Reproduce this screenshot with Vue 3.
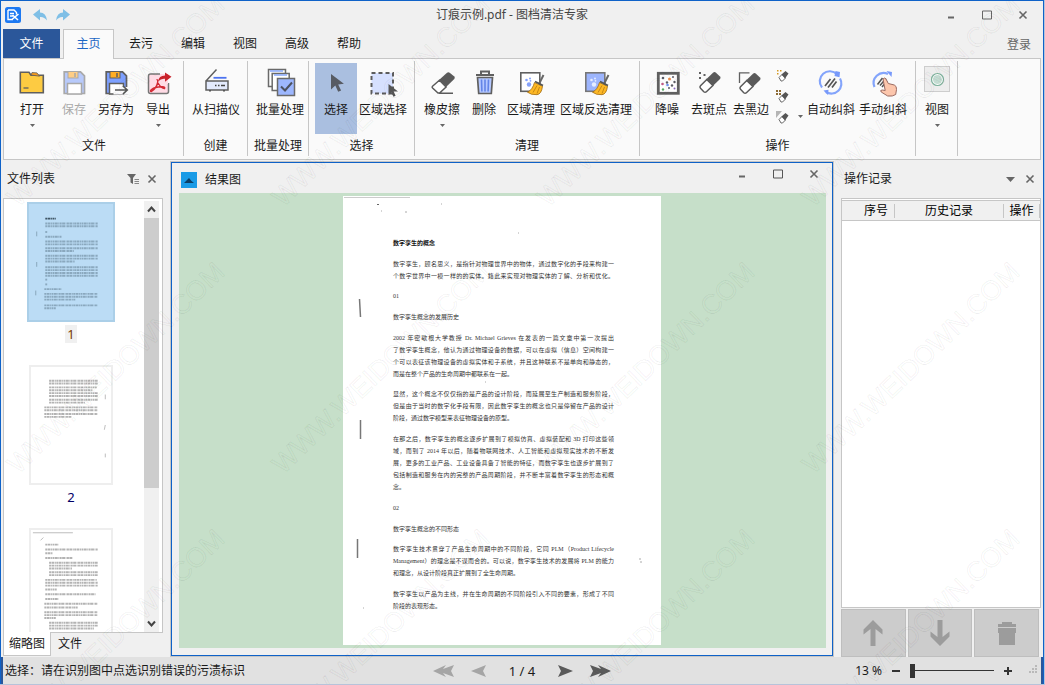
<script setup>
import { ref } from 'vue'

const floppy = (body, line, metal) => `
  <path d="M3.200 1.800h16.300l4 4v17.700h-20.300z" fill="${body}" stroke="${line}" stroke-width="1.700"/>
  <rect x="7" y="1.500" width="10" height="6.500" fill="${metal}" stroke="${line}"/>
  <path d="M14 3v4" stroke="${line}" stroke-width="1.500"/>
  <path d="M6.500 24v-10.500h14v10.500z" fill="#fff" stroke="${line}" stroke-width="1.500"/>`

const broom = `
  <path d="M25.500 5l-4.500 9" stroke="#666" stroke-width="2"/>
  <path d="M16.500 12.500l8 3.700q-1 8-5.500 8.500-6 .3-9.500-2.500 5-2.500 7-9.700z" fill="#fdb825" stroke="#a06a10" stroke-width=".8"/>
  <path d="M19 15.500l-4 7M21.500 17l-2.500 6.500" stroke="#b87a10" stroke-width=".8"/>
  <path d="M17 11.500l8 4" stroke="#555" stroke-width="1.800"/>`

const bubbles = (c) => `<g fill="${c}"><circle cx="8.500" cy="10" r="1.300"/><circle cx="12" cy="8.500" r="1"/><circle cx="12.500" cy="10.800" r=".9"/><circle cx="11" cy="14.500" r="2.200"/></g>`

// Diagonal two-tone eraser: dark sleeve at the upper right, white tip at the lower left
const rubber = `
  <path d="M10.800 9.500l-6.300 6.300q-1.200 1.300 0 2.500l3.300 3.400q1.300 1.200 2.600 0l6.500-6.200z" fill="#fff" stroke="#5a5a5a" stroke-width="1.500"/>
  <path d="M10 9.500l7-6.800q1.500-1.200 3 0l4 3.800q1.200 1.300 0 2.600l-7.200 7z" fill="#5a5a5a"/>`

const icons = {
  open: `<path d="M1.300 22.800v-20.600h8.700l2 3h12.300v17.600z" fill="#fdcb42" stroke="#5f5f5f" stroke-width="1.600"/>
    <path d="M12 5l1-2.500 5 .4 2.500 3.300z" fill="#f59a1d" stroke="#5f5f5f" stroke-width=".8"/><path d="M4.500 18h5" stroke="#5f5f5f" stroke-width="1.300"/>`,
  save: floppy('#b8cafb', '#a9a9a9', '#ffce85'),
  saveAs: floppy('#7da0ff', '#5f5f5f', '#ffad23') + `<path d="M10.500 17h15v7.500h-15z" fill="#fafafa"/><path d="M12 20h12M20 16l4.200 4-4.200 4" fill="none" stroke="#555" stroke-width="1.700"/>`,
  exportFile: `<path d="M15 4H5.500q-2 0-2 2v15.500q0 2 2 2h16q2 0 2-2V13" fill="#ffdbe5" stroke="#777" stroke-width="1.500"/><path d="M15 4h8v10h-8z" fill="#ffdbe5"/>
    <path d="M11.500 10q1.800-1 1 3-1 5-6 8.500-2 0 0-2 4-3 11-2.700 3 .3 2 1.700-3 .2-6.500-5.500" fill="none" stroke="#d42a35" stroke-width="1.400"/>
    <path d="M13 11.500q.8-6 7-6v-3l6.500 4.200-6.500 5v-3q-4-.5-7 2.800z" fill="#c9222b"/>`,
  scan: `<path d="M3 11L13.500-.5M3 11v9h22v-9z" fill="#e3eafd" stroke="#5f5f5f" stroke-width="1.500"/><path d="M10.500 7.800h13" stroke="#4d73f0" stroke-width="1.800"/>
    <path d="M12 15.500h1.500M15 15.500h1.500M18 15.500h4" stroke="#444" stroke-width="1.600"/><path d="M7 20v1.500M21 20v1.500" stroke="#555" stroke-width="2"/>`,
  batch: `<g stroke="#6a6a6a" stroke-width="1.500"><rect x="1.500" y="-.5" width="17" height="17" fill="#fff" /><path d="M3 1h13" stroke="#87a7fb"/><rect x="5.200" y="3.500" width="17" height="17" fill="#fff"/><path d="M7 5h13" stroke="#87a7fb"/>
    <rect x="10.500" y="8.500" width="17" height="17" fill="#9db7fe"/></g><path d="M14 16.500l4 4 7-8" fill="none" stroke="#4d5260" stroke-width="2"/>`,
  select: `<path d="M8 4v15.500l4.300-4 2.900 6.300 2.900-1.300-2.900-6 5.700-.7z" fill="#575b63"/>`,
  region: `<rect x="1.500" y="3" width="21.500" height="20.500" fill="#d6e0fe" stroke="#5c5c5c" stroke-width="2" stroke-dasharray="4 3"/>
    <path d="M18.500 14v11l3-2.600 1.900 4.300 2.200-.9-1.900-4.300h4.300z" fill="#555"/>`,
  eraser: `<path d="M10 10l8-7.300q1.500-1 3 .2l4.300 3.600q1 1.200 0 2.500l-8 7.800z" fill="#5a5a5a"/>
    <path d="M10.400 10.300l-6.600 5.700q-1.200 1-.2 2l5.400 5h1.600l6.500-6zM10 23.300h14" fill="#fff" stroke="#5a5a5a" stroke-width="1.500"/>`,
  trash: `<path d="M10 4V1.500h8V4M5 5h18" fill="none" stroke="#606060" stroke-width="2"/><path d="M6.500 7.500h15l-1.200 16h-12.600z" fill="#b5c8ff" stroke="#606060" stroke-width="1.700"/>
    <path d="M10.500 9.500l.4 12M14 9.500v12M17.500 9.500l-.4 12" stroke="#6385e8" stroke-width="1.600"/>`,
  clean: `<rect x="2.800" y="2.800" width="19" height="18.500" fill="#fff" stroke="#606060" stroke-width="1.600"/>` + bubbles('#86a2fb') + broom,
  cleanInverse: `<rect x="2.800" y="2.800" width="19" height="18.500" fill="#9db5fd" stroke="#777" stroke-width="1.600"/>` + bubbles('#e6edff') + broom,
  denoise: `<rect x="4.300" y="3.300" width="20" height="20" fill="#fff" stroke="#606060" stroke-width="2.800"/>
    <g fill="#5c5c66"><circle cx="9" cy="8" r="1.300"/><circle cx="13" cy="12.500" r="1.200"/><circle cx="19" cy="7" r="1"/><circle cx="18" cy="15.500" r="1.200"/><circle cx="15" cy="18" r="1"/><circle cx="20.500" cy="12" r="1.200"/></g>
    <circle cx="15.500" cy="9" r="1.500" fill="#ee8f4c"/><circle cx="8.500" cy="14" r="1.300" fill="#c05a86"/><circle cx="13.500" cy="15" r="1.300" fill="#7191f3"/><circle cx="9" cy="19.500" r="1.200" fill="#59a868"/><circle cx="20.500" cy="18.500" r="1" fill="#8a6bc2"/>`,
  spots: rubber + `<g fill="#606060"><path d="M3 2h2v2h-2zM7.500 4h2v2h-2zM3 7h2v2h-2z"/></g>`,
  edges: `<g transform="translate(-2 1)">${rubber}</g><path d="M1.500 13V2.800h10" fill="none" stroke="#606060" stroke-width="1.300"/>`,
  auto: `<path d="M4 17.500A10 10 0 0 1 19 4.300M22 8.500A10 10 0 0 1 8 22" fill="none" stroke="#83a4fb" stroke-width="2.200"/><path d="M17.500 1l4.500 1-.5 5.200-5-1.200zM5.500 20.500l5-.8-.5 5.300z" fill="#7799fa"/>
    <path d="M7 16l5.500-7M10 17.500l7-9M14 17.500l4.500-6" stroke="#555" stroke-width="1.700"/>`,
  manual: `<path d="M4.500 17A10 10 0 0 1 18 4" fill="none" stroke="#83a4fb" stroke-width="2.200"/><path d="M16.500 1l5.500 1-.5 5z" fill="#7799fa"/><path d="M7.500 14.500l5-6.500M10 15.500l6-7M12 17l5-6" stroke="#555" stroke-width="1.500"/>
    <path d="M13 9q1.500-2 3 0l2.300 4.500 6 1.500q2.500 1 2.200 4.500l-.8 5q-3 2.200-8 1.500l-6.500-4q-1.400-2 1-2l3 .5z" fill="#fcc6ac" stroke="#9a6b62" stroke-width="1"/>`,
  view: `<rect x=".5" y="-3.500" width="25" height="25" fill="#ededed" stroke="#cdcdcd"/><circle cx="13.500" cy="9.500" r="6" fill="#fff" stroke="#7db19b" stroke-width="1.200"/><circle cx="13.500" cy="9.500" r="4.500" fill="#c4dcd2"/>`,
}

const groups = [
  { title: '文件', size: 'g-file', tools: [
    { label: '打开', icon: 'open', menu: true }, { label: '保存', icon: 'save', off: true },
    { label: '另存为', icon: 'saveAs' }, { label: '导出', icon: 'exportFile', menu: true }] },
  { title: '创建', size: 'g-scan', tools: [{ label: '从扫描仪', icon: 'scan', wide: true }] },
  { title: '批量处理', size: 'g-batch', tools: [{ label: '批量处理', icon: 'batch', wide: true }] },
  { title: '选择', size: 'g-select', tools: [
    { label: '选择', icon: 'select', on: true }, { label: '区域选择', icon: 'region', wide: true }] },
  { title: '清理', size: 'g-clean', tools: [
    { label: '橡皮擦', icon: 'eraser', menu: true }, { label: '删除', icon: 'trash' },
    { label: '区域清理', icon: 'clean', wide: true }, { label: '区域反选清理', icon: 'cleanInverse', widest: true }] },
  { title: '操作', size: 'g-ops', tools: [
    { label: '降噪', icon: 'denoise' }, { label: '去斑点', icon: 'spots' }, { label: '去黑边', icon: 'edges' },
    { small: true }, { label: '自动纠斜', icon: 'auto', wide: true }, { label: '手动纠斜', icon: 'manual', wide: true }] },
  { title: '', size: 'g-view', tools: [{ label: '视图', icon: 'view', menu: true }] },
]

const smallTools = [
  { name: '去装订孔', mark: 'M1 1h1.500v1.500H1zM4 1h1.500v1.500H4zM1 4h1.500v1.500H1z', color: '#d59a22' },
  { name: '去底色', mark: 'M0 0h2v2H0zM3 0h2v2H3zM0 3h2v2H0zM3 3h2v2H3z', color: '#8d6b35' },
  { name: '去阴影', mark: 'M0 0h6L0 7z', color: '#b5b5b5' },
]

const tabs = ['主页', '去污', '编辑', '视图', '高级', '帮助']
const activeTab = ref('主页')
const zoomLevel = ref(0)

const paragraphs = [
  { bold: true, lines: ['数字孪生的概念'] },
  { lines: ['数字孪生，顾名思义，是指针对物理世界中的物体，通过数字化的手段来构建一', '个数字世界中一模一样的的实体。籍此来实现对物理实体的了解、分析和优化。'], full: true },
  { lines: ['01'] },
  { lines: ['数字孪生概念的发展历史'] },
  { lines: ['2002 年密歇根大学教授 Dr. Michael Grieves 在发表的一篇文章中第一次提出', '了数字孪生概念，他认为通过物理设备的数据，可以在虚拟（信息）空间构建一', '个可以表征该物理设备的虚拟实体和子系统，并且这种联系不是单向和静态的，', '而是在整个产品的生命周期中都联系在一起。'] },
  { lines: ['显然，这个概念不仅仅指的是产品的设计阶段，而延展至生产制造和服务阶段，', '但是由于当时的数字化手段有限，因此数字孪生的概念也只是停留在产品的设计', '阶段，通过数字模型来表征物理设备的原型。'] },
  { lines: ['在那之后，数字孪生的概念逐步扩展到了模拟仿真、虚拟装配和 3D 打印这些领', '域，而到了 2014 年以后，随着物联网技术、人工智能和虚拟现实技术的不断发', '展，更多的工业产品、工业设备具备了智能的特征，而数字孪生也逐步扩展到了', '包括制造和服务在内的完整的产品周期阶段，并不断丰富着数字孪生的形态和概', '念。'] },
  { lines: ['02'] },
  { lines: ['数字孪生概念的不同形态'] },
  { lines: ['数字孪生技术贯穿了产品生命周期中的不同阶段，它同 PLM（Product Lifecycle', 'Management）的理念是不谋而合的。可以说，数字孪生技术的发展将 PLM 的能力', '和理念，从设计阶段真正扩展到了全生命周期。'] },
  { lines: ['数字孪生以产品为主线，并在生命周期的不同阶段引入不同的要素，形成了不同', '阶段的表现形态。'] },
]

// Text rows of each thumbnail: [y, left, right] on an 84 x 120 sheet
const thumbs = [
  { no: 1, rows: [[14, 15, 26, 1], [19, 15, 70], [22, 15, 70], [28, 15, 17], [33, 15, 32], [38, 15, 70], [41, 15, 70], [45, 15, 70], [48, 15, 45], [53, 15, 70], [56, 15, 70], [59, 15, 46], [65, 15, 70], [68, 15, 70], [71, 15, 70], [74, 15, 70], [78, 15, 17], [83, 15, 17], [88, 14, 32], [93, 14, 70], [96, 14, 70], [99, 14, 47], [105, 14, 70], [108, 14, 26]], marks: 'M6 28v5M6 60v5M5 90v5' },
  { no: 2, rows: [[13, 19, 70], [16, 19, 70], [20, 19, 69], [23, 19, 65], [26, 19, 70], [29, 19, 70], [33, 19, 70], [36, 19, 57], [41, 14, 70], [44, 14, 70], [48, 14, 70], [51, 14, 43]], marks: 'M78 28v5M78 60l-1 5M78 90v4' },
  { rows: [[14, 15, 29], [19, 15, 70], [23, 15, 23], [28, 15, 44], [33, 19, 70], [36, 19, 70], [39, 19, 43], [43, 19, 70], [46, 19, 70], [51, 15, 69], [54, 15, 70], [57, 15, 70], [61, 15, 27], [66, 15, 68], [71, 15, 29], [76, 14, 70], [80, 14, 49], [85, 14, 70], [88, 14, 70], [91, 14, 26], [96, 19, 70], [99, 19, 70], [102, 19, 66]], marks: 'M10 10l3-3M2 2h42' },
]

const marks = [0, 1, 2].flatMap((r) => [0, 1, 2, 3].map((c) => ({ x: 17 + c * 265, y: 207 + r * 267 })))
</script>

<template>
  <div class="window">
    <header class="titlebar">
      <div class="quick">
        <svg class="logo" viewBox="0 0 16 16"><rect width="16" height="16" rx="2.500" fill="#1d79f2" /><path d="M3 3h6l2.500 2.500v2M3 3v9.500h5M5 6.500h4M5 9h3" fill="none" stroke="#fff" stroke-width="1.400" /><path d="M7.500 8l5.500 5M13.500 7l-6 5" stroke="#fff" stroke-width="1.600" /></svg>
        <button class="plain" aria-label="撤销"><svg width="14" height="13" viewBox="0 0 14 13"><path d="M0 5.500L7 0v3.500q6 0 7 8-3-4-7-3.500v3.500z" fill="#7fbfe6" /></svg></button>
        <button class="plain" aria-label="重做"><svg width="14" height="13" viewBox="0 0 14 13"><path d="M14 5.500L7 0v3.500q-6 0-7 8 3-4 7-3.500v3.500z" fill="#7fbfe6" /></svg></button>
      </div>
      <h1>订痕示例.pdf - 图档清洁专家</h1>
      <div class="controls">
        <button class="plain" aria-label="最小化"><svg width="10" height="10"><path d="M2 7.500h6" stroke="#666" stroke-width="2" /></svg></button>
        <button class="plain" aria-label="最大化"><svg width="10" height="10"><path d="M.5 1h9v8h-9z" fill="none" stroke="#666" /></svg></button>
        <button class="plain" aria-label="关闭"><svg width="10" height="10"><path d="M1.500 1.500l7 7M8.500 1.500l-7 7" stroke="#666" stroke-width="1.600" /></svg></button>
      </div>
    </header>

    <nav class="tabs">
      <button class="file">文件</button>
      <button v-for="t in tabs" :key="t" class="tab" :class="{ active: t === activeTab }" @click="activeTab = t">{{ t }}</button>
      <a href="#login" class="login">登录</a>
    </nav>

    <section class="ribbon">
      <div v-for="g in groups" :key="g.size" class="group" :class="g.size">
        <div class="tools">
          <template v-for="(t, i) in g.tools" :key="i">
            <div v-if="t.small" class="small-tools">
              <div class="small-list">
                <button v-for="s in smallTools" :key="s.name" class="plain" :aria-label="s.name">
                  <svg width="13" height="13" viewBox="0 0 13 13"><path :d="s.mark" :fill="s.color" /><path d="M3 8.500l3-3 3.500 3.500-3 3h-1.500z" fill="#fff" stroke="#666" /><path d="M5.500 5.500l4-3.500 3 2.500-3.500 5z" fill="#555" /></svg>
                </button>
              </div>
              <svg class="caret" viewBox="0 0 5 3"><path d="M0 0h5L2.500 3z" fill="#666" /></svg>
            </div>
            <button v-else class="tool" :class="{ on: t.on, wide: t.wide, widest: t.widest }" :disabled="t.off">
              <svg class="icon" viewBox="-2 -4 30 30" fill="none" v-html="icons[t.icon]"></svg>
              <span>{{ t.label }}</span>
              <svg v-if="t.menu" class="caret" viewBox="0 0 5 3"><path d="M0 0h5L2.500 3z" fill="#666" /></svg>
            </button>
          </template>
        </div>
        <p>{{ g.title }}</p>
      </div>
    </section>

    <main class="work">
      <aside class="side left">
        <div class="side-head">
          <h2>文件列表</h2>
          <button class="plain" aria-label="筛选"><svg width="12" height="12"><path d="M0 1h9L6 5v6L3.500 9.500V5z" fill="#666" /><path d="M7.500 6.500H12M7.500 8.500H12M7.500 10.500H12" stroke="#888" /></svg></button>
          <button class="plain" aria-label="关闭文件列表"><svg width="10" height="10"><path d="M1.500 1.500l7 7M8.500 1.500l-7 7" stroke="#666" stroke-width="1.600" /></svg></button>
        </div>
        <div class="list">
          <div class="pages">
            <figure v-for="(t, i) in thumbs" :key="i" :class="{ chosen: t.no === 1 }">
              <div class="sheet">
                <svg viewBox="0 0 84 120">
                  <path v-for="r in t.rows" :key="r[0]" :d="`M${r[1]} ${r[0]}.5H${r[2]}`" :class="{ dark: r[3] }" class="row" />
                  <path :d="t.marks" class="scratch" />
                </svg>
              </div>
              <figcaption v-if="t.no"><span>{{ t.no }}</span></figcaption>
            </figure>
          </div>
          <div class="scroll">
            <svg viewBox="0 0 15 15"><path d="M4 9.500l3.500-4 3.500 4" fill="none" stroke="#444" stroke-width="2" /></svg>
            <div class="rail"><div class="grab"></div></div>
            <svg viewBox="0 0 15 15"><path d="M4 5.500l3.500 4 3.500-4" fill="none" stroke="#444" stroke-width="2" /></svg>
          </div>
        </div>
        <div class="side-tabs"><button class="current">缩略图</button><button>文件</button></div>
      </aside>

      <section class="result">
        <div class="result-head">
          <svg class="badge" viewBox="0 0 16 16"><rect width="16" height="16" fill="#1a9be6" /><path d="M3 11l3-3 2-2 2.500 3 2.500 2z" fill="#0b3f66" /></svg>
          <h2>结果图</h2>
          <div class="controls">
            <button class="plain" aria-label="最小化结果图"><svg width="10" height="10"><path d="M2 7.500h6" stroke="#666" stroke-width="2" /></svg></button>
            <button class="plain" aria-label="最大化结果图"><svg width="10" height="10"><path d="M.5 1h9v8h-9z" fill="none" stroke="#555" /></svg></button>
            <button class="plain" aria-label="关闭结果图"><svg width="10" height="10"><path d="M1.500 1.500l7 7M8.500 1.500l-7 7" stroke="#666" stroke-width="1.600" /></svg></button>
          </div>
        </div>
        <div class="canvas">
          <article class="paper">
            <div v-for="(p, i) in paragraphs" :key="i" class="para" :class="{ bold: p.bold }">
              <p v-for="(l, j) in p.lines" :key="j" :class="{ full: p.full || j < p.lines.length - 1 }">{{ l }}</p>
            </div>
            <svg class="specks" viewBox="0 0 318 449">
              <path d="M16.500 103l1 18M17.500 224v19M14.500 343v19" stroke="#777" stroke-width="1.500" />
              <path d="M1 1.500h66" stroke="#ccc" /><path d="M34 8.500h2" stroke="#666" /><path d="M38 15h1M62 16h2M98 8h1M297 362v2M298 365v2M20 412h1M175 37h1M142 186h1" stroke="#aaa" />
            </svg>
          </article>
        </div>
      </section>

      <aside class="side right">
        <div class="side-head">
          <h2>操作记录</h2>
          <button class="plain" aria-label="菜单"><svg width="10" height="10"><path d="M1 3h9L5.500 8z" fill="#666" /></svg></button>
          <button class="plain" aria-label="关闭操作记录"><svg width="10" height="10"><path d="M1.500 1.500l7 7M8.500 1.500l-7 7" stroke="#666" stroke-width="1.600" /></svg></button>
        </div>
        <div class="records">
          <table>
            <thead><tr><th class="no"><span>序号</span></th><th><span>历史记录</span></th><th class="act"><span>操作</span></th></tr></thead>
          </table>
        </div>
        <div class="actions">
          <button aria-label="上移"><svg viewBox="0 0 26 28"><path d="M13 1L3.500 10.500v5L10.500 10v17h5V10l7 5.500v-5z" fill="#9c9c9c" /></svg></button>
          <button aria-label="下移"><svg viewBox="0 0 26 28"><path d="M13 27l9.500-9.500v-5L15.500 18V1h-5v17l-7-5.500v5z" fill="#9c9c9c" /></svg></button>
          <button aria-label="删除记录"><svg viewBox="0 0 26 28"><path d="M4 5h4V3h10v2h4v3H4zM4 9h18v5h-1v12H5V14H4z" fill="#9c9c9c" /></svg></button>
        </div>
      </aside>
    </main>

    <footer class="status">
      <span>选择：请在识别图中点选识别错误的污渍标识</span>
      <div class="pager">
        <button class="plain dim" aria-label="首页"><svg width="22" height="12"><path d="M0 6L13 0l-3 4L21 0l-3 6 3 6-11-4 3 4z" /></svg></button>
        <button class="plain dim" aria-label="上一页"><svg width="16" height="12"><path d="M0 6L15 0l-3 6 3 6z" /></svg></button>
        <span>1 / 4</span>
        <button class="plain" aria-label="下一页"><svg width="16" height="12"><path d="M16 6L1 0l3 6-3 6z" /></svg></button>
        <button class="plain" aria-label="末页"><svg width="22" height="12"><path d="M22 6L9 0l3 4L1 0l3 6-3 6 11-4-3 4z" /></svg></button>
      </div>
      <div class="zoom">
        <label for="zoom">13 %</label>
        <button class="plain" aria-label="缩小"><svg width="10" height="10"><path d="M1 5h8" stroke="#333" stroke-width="2" /></svg></button>
        <input id="zoom" v-model="zoomLevel" type="range" min="0" max="100" />
        <button class="plain" aria-label="放大"><svg width="10" height="10"><path d="M1 5h8M5 1v8" stroke="#333" stroke-width="2" /></svg></button>
        <svg class="grip" width="9" height="9"><path d="M6 0h2v2H6zM3 3h2v2H3zM6 3h2v2H6zM0 6h2v2H0zM3 6h2v2H3zM6 6h2v2H6z" fill="#b9b9b9" /></svg>
      </div>
    </footer>

    <svg class="watermark" aria-hidden="true">
      <text v-for="m in marks" :key="`${m.x}-${m.y}`" :transform="`translate(${m.x} ${m.y}) rotate(-44)`">WWW.WEIDOWN.COM</text>
    </svg>
  </div>
</template>

<style>
body {
  margin: 0;
  background: #b7c3da;
}
</style>

<style scoped>
.window {
  position: relative;
  box-sizing: border-box;
  height: calc(100vh - 1px);
  margin-right: 1px;
  display: flex;
  flex-direction: column;
  overflow: hidden;
  border: 1px solid #0f62c8;
  border-bottom: 0;
  background: #f0f0f0;
  color: #1a1a1a;
  font-family: "Noto Sans", "Noto Sans CJK SC", sans-serif;
  font-size: 12px;
  line-height: 16px;
}
h1, h2, p, figure { margin: 0; font-size: 12px; font-weight: 400; }
button { font: inherit; color: inherit; padding: 0; border: 0; background: none; }
.plain { display: flex; align-items: center; justify-content: center; }

.titlebar { display: grid; grid-template-columns: 1fr auto 1fr; align-items: center; height: 28px; }
.quick { display: flex; align-items: center; gap: 9px; padding-left: 4px; }
.logo { width: 16px; height: 16px; margin-right: 3px; }
.titlebar h1 { padding-right: 20px; color: #444; }
.controls { display: flex; justify-content: flex-end; gap: 26px; }
.titlebar .controls { padding-right: 15px; }

.tabs { display: flex; height: 29px; padding: 0 2px; }
.file { width: 57px; margin-right: 3px; background: #2b579a; color: #fff; }
.tab { width: 52px; }
.tab.active {
  box-sizing: border-box;
  width: 51px;
  margin-right: 1px;
  margin-bottom: -1px;
  padding-bottom: 2px;
  position: relative;
  z-index: 1;
  border: 1px solid #c6c6c6;
  border-bottom: 0;
  background: #fafafa;
  color: #1a66c4;
}
.login { margin-left: auto; padding: 8px 10px 0 0; color: #666; text-decoration: none; }

.ribbon { display: flex; margin: 0 2px; border: 1px solid #c6c6c6; background: #fafafa; }
.group { box-sizing: border-box; margin: 2px 0 3px; padding: 2px 0 2px 6px; border-right: 1px solid #c6c6c6; }
.g-file { width: 180px; padding-left: 7px; }
.g-scan { width: 64px; }
.g-batch { width: 61px; }
.g-select { width: 106px; }
.g-clean { width: 225px; }
.g-ops { width: 276px; }
.g-view { width: 42px; padding-left: 0; }
.tools { display: flex; height: 71px; }
.group p { height: 16px; margin: 4px 6px 0 0; text-align: center; }
.tool { box-sizing: border-box; flex: none; width: 42px; height: 71px; padding-top: 3px; display: flex; flex-direction: column; align-items: center; white-space: nowrap; }
.tool span { line-height: 18px; }
.tool.wide { width: 52px; }
.tool.widest { width: 78px; }
.tool.on { background: #aabfe0; }
.tool:disabled { color: #aaa; }
.icon { flex: none; width: 30px; height: 30px; margin-bottom: 5px; overflow: visible; }
.caret { width: 5px; height: 3px; margin-top: 5px; }
.small-tools { display: flex; align-items: flex-end; gap: 9px; box-sizing: border-box; width: 33px; height: 61px; padding-left: 4px; }
.small-list { display: flex; flex-direction: column; gap: 8px; }
.small-tools .caret { margin-bottom: 6px; flex: none; }

.work { flex: 1; min-height: 0; display: flex; padding: 0 2px; }
.side { display: flex; flex-direction: column; }
.left { width: 160px; margin-right: 8px; }
.right { width: 200px; }
.side-head { display: flex; align-items: center; gap: 8px; height: 38px; padding: 0 6px 0 4px; }
.right .side-head { padding-left: 3px; gap: 10px; }
.side-head h2 { flex: 1; }
.list { flex: 1; min-height: 0; display: flex; border: 1px solid #c6c6c6; background: #fff; padding: 2px 3px 0 0; }
.pages { flex: 1; overflow: hidden; padding: 1px 6px 0 0; display: flex; flex-direction: column; align-items: center; }
.pages figure { flex: none; height: 163px; }
.sheet { box-sizing: border-box; width: 84px; height: 120px; margin: 0 2px; border: 2px solid #eee; }
.sheet svg { display: block; width: 80px; height: 116px; }
.chosen .sheet { width: 88px; margin: 0; background: #bbdcf5; border-color: #abcfe8; }
.chosen .sheet svg { margin: 0 auto; }
.row { stroke: #b3b3b3; stroke-width: 2; stroke-dasharray: 2 0.5 3 0.6 1 0.5; }
.chosen .row { stroke: #8aa8be; }
.chosen .dark { stroke: #3f5565; }
.scratch { stroke: #bbb; stroke-width: 1; fill: none; }
.chosen .scratch { stroke: #86a3b8; }
figcaption { text-align: center; padding-top: 3px; color: #000066; font-size: 13px; }
figcaption span { display: inline-block; padding: 1px 2px; }
.chosen figcaption span { background: #f0f0f0; color: #7a3a00; }
.scroll { width: 15px; display: flex; flex-direction: column; background: #f0f0f0; }
.scroll svg { width: 15px; height: 17px; }
.rail { flex: 1; }
.grab { height: 68%; background: #cdcdcd; }
.side-tabs { display: flex; height: 24px; }
.side-tabs button { width: 38px; height: 22px; }
.side-tabs .current { box-sizing: border-box; width: 48px; margin-top: -1px; height: 24px; border: 1px solid #c6c6c6; border-top: 0; background: #fff; }

.result { flex: 1; min-width: 0; display: flex; flex-direction: column; margin: 2px 8px 1px 0; border: 1px solid #0f62c8; box-shadow: 0 0 0 1px #c6c6c6; }
.result-head { display: flex; align-items: center; gap: 8px; height: 30px; padding: 0 13px 0 9px; }
.result-head h2 { flex: 1; padding-top: 4px; }
.badge { width: 16px; height: 16px; margin-top: 4px; }
.result-head .controls { padding-bottom: 9px; }
.canvas { flex: 1; min-height: 0; margin: 0 6px 7px 7px; padding: 3px; display: flex; justify-content: center; background: #c6dfc9; }
.paper { position: relative; box-sizing: border-box; width: 318px; margin-right: 1px; padding: 41px 47px 33px 50px; display: flex; flex-direction: column; justify-content: space-between; background: #fff; color: #333; font-family: "Liberation Serif", "Noto Sans CJK SC", serif; }
.para p { font-size: 6px; line-height: 12px; height: 12px; white-space: nowrap; }
.para p.full { text-align: justify; text-align-last: justify; }
.para.bold p { font-weight: 700; color: #111; }
.specks { position: absolute; inset: 0; width: 100%; height: 100%; }

.records { flex: 1; border: 1px solid #c6c6c6; background: #fff; }
table { width: 100%; table-layout: fixed; border-collapse: collapse; margin-top: 1px; background: #f0f0f0; border: solid #c6c6c6; border-width: 1px 0; }
th { height: 19px; padding: 0; font-weight: 400; color: #000; }
th span { display: block; line-height: 14px; border-right: 1px solid #c6c6c6; }
.no { width: 53px; }
.no span { padding-left: 16px; }
.act { width: 36px; }
.actions { display: flex; gap: 2px; height: 49px; padding: 1px 2px 0 0; box-sizing: border-box; }
.actions button { flex: 1; display: flex; align-items: center; justify-content: center; border: 1px solid #bebebe; background: #ccc; }
.actions svg { width: 26px; height: 28px; }

.status { display: grid; grid-template-columns: 1fr auto 1fr; align-items: center; height: 27px; padding: 0 2px; border: solid #2b579a; border-width: 0 2px; background: #e1e1e1; }
.status > span { white-space: nowrap; }
.pager { display: flex; align-items: center; justify-content: center; gap: 16px; font-size: 13px; fill: #5a5a5a; }
.pager span { margin: 0 6px; }
.pager .dim { fill: #a5a5a5; }
.pager svg { display: block; }
.zoom { display: flex; align-items: center; justify-content: flex-end; gap: 9px; }
.zoom input { appearance: none; width: 84px; height: 16px; margin: 0; background: linear-gradient(#333, #333) center / 100% 1px no-repeat; }
.zoom input::-webkit-slider-thumb { appearance: none; width: 5px; height: 14px; background: #333; }
.grip { align-self: flex-end; margin: 0 1px 5px 7px; }

.watermark { position: absolute; z-index: 5; inset: 0; width: 100%; height: 100%; pointer-events: none; }
.watermark text { font-family: "Liberation Sans", sans-serif; font-size: 27px; fill: none; stroke: #000; stroke-opacity: 0.06; stroke-width: 1; }
</style>
